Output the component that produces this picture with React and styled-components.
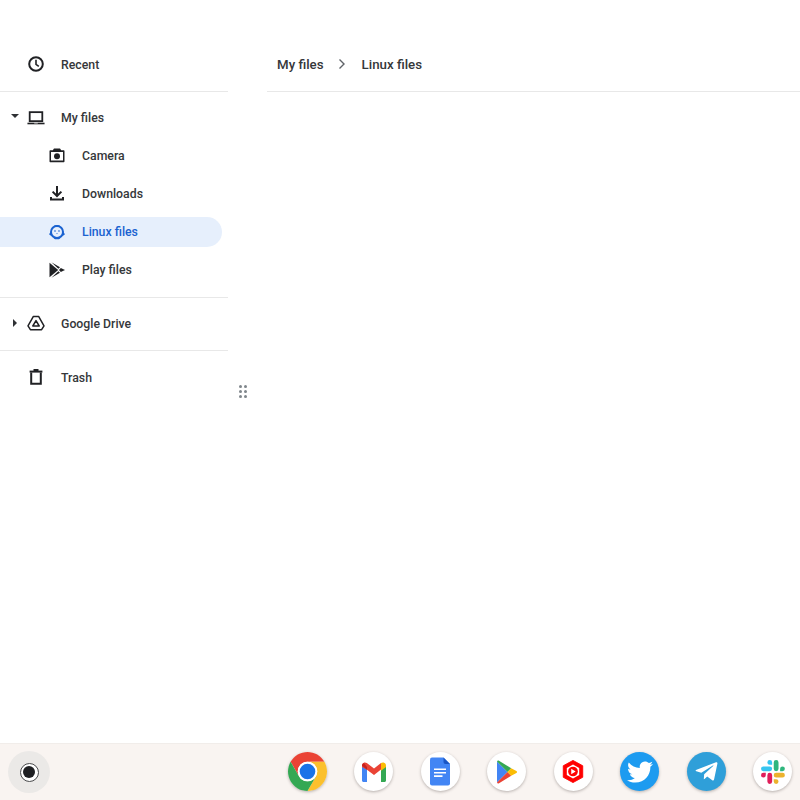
import React from 'react';
import styled, { createGlobalStyle } from 'styled-components';
import { FaTwitter, FaTelegramPlane } from 'react-icons/fa';

const GlobalStyle = createGlobalStyle`
  html, body {
    margin: 0;
    padding: 0;
    background: #fff;
    font-family: Roboto, "Liberation Sans", sans-serif;
  }
`;

const Page = styled.div`
  display: flex;
  flex-direction: column;
  width: 800px;
  height: 800px;
  overflow: hidden;
`;

const Body = styled.div`
  display: flex;
  flex: 1;
  min-height: 0;
`;

const Sidebar = styled.nav`
  display: flex;
  flex-direction: column;
  width: 228px;
  padding-top: 45px;
`;

const Section = styled.div`
  display: flex;
  flex-direction: column;
  padding: ${(p) => p.$padding};
  border-bottom: ${(p) => (p.$last ? 'none' : '1px solid #e8e8e8')};
`;

const Row = styled.div`
  display: flex;
  align-items: center;
  height: 38px;
  padding-left: ${(p) => (p.$child ? '48px' : '27px')};
  font-size: 12.3px;
  font-weight: 500;
  color: ${(p) => (p.$active ? '#1a62d0' : '#35373a')};
  position: relative;

  ${(p) =>
    p.$active &&
    `
    &::before {
      content: '';
      position: absolute;
      left: 0;
      top: 5px;
      width: 222px;
      height: 30px;
      background: #e6effc;
      border-radius: 0 15px 15px 0;
    }
  `}
`;

const Caret = styled.span`
  position: absolute;
  left: ${(p) => (p.$open ? '11px' : '13px')};
  top: 16px;
  width: 0;
  height: 0;
  border-style: solid;
  ${(p) =>
    p.$open
      ? 'border-width: 4px 4px 0 4px; border-color: #2f3134 transparent transparent transparent;'
      : 'border-width: 4px 0 4px 4px; border-color: transparent transparent transparent #2f3134; top: 15px;'}
`;

const IconSlot = styled.span`
  position: relative;
  top: ${(p) => (p.$nudge ? '1px' : '0')};
  display: flex;
  align-items: center;
  justify-content: center;
  width: 18px;
  height: 18px;
  margin-right: 16px;
  flex-shrink: 0;
`;

const Label = styled.span`
  position: relative;
  top: 1px;
`;

const Gutter = styled.div`
  display: flex;
  justify-content: center;
  width: 39px;
  box-sizing: border-box;
  padding: 385px 9px 0 0;
  flex-shrink: 0;
`;

const Grip = styled.div`
  display: grid;
  grid-template-columns: 3px 3px;
  grid-auto-rows: 3px;
  gap: 2px;
  height: 13px;

  span {
    border-radius: 50%;
    background: #7f868b;
  }
`;

const Content = styled.main`
  flex: 1;
  min-width: 0;
`;

const Breadcrumbs = styled.div`
  display: flex;
  align-items: center;
  height: 47px;
  margin-top: 45px;
  padding: 0 0 8px 10px;
  box-sizing: border-box;
  border-bottom: 1px solid #e8e8e8;
  font-size: 13.3px;
  font-weight: 500;
  color: #35373a;
`;

const Chevron = styled.svg`
  width: 10px;
  height: 12px;
  margin: 0 14.5px 0 13.5px;
`;

const Shelf = styled.footer`
  display: flex;
  align-items: center;
  justify-content: space-between;
  height: 57px;
  box-sizing: border-box;
  padding: 0 8px;
  background: #f9f4f1;
  border-top: 1px solid #f1edea;
`;

const Launcher = styled.div`
  display: flex;
  align-items: center;
  justify-content: center;
  width: 42px;
  height: 42px;
  border-radius: 50%;
  background: #ebe9e7;
`;

const LauncherRing = styled.div`
  display: flex;
  align-items: center;
  justify-content: center;
  width: 17px;
  height: 17px;
  border: 1px solid #4a4b4d;
  border-radius: 50%;
  background: #fff;
`;

const LauncherDot = styled.div`
  width: 12px;
  height: 12px;
  border-radius: 50%;
  background: #1e1f22;
`;

const Apps = styled.div`
  display: flex;
  align-items: center;
  gap: 27.43px;
  margin-bottom: 1px;
`;

const AppIcon = styled.div`
  display: flex;
  align-items: center;
  justify-content: center;
  width: 39px;
  height: 39px;
  border-radius: 50%;
  background: ${(p) => p.$bg || '#fff'};
  color: #fff;
  box-shadow: 0 1px 3px rgba(60, 50, 45, 0.35);
`;

const ClockIcon = () => (
  <svg width="18" height="18" viewBox="0 0 18 18" fill="none" stroke="#202124" strokeWidth="2">
    <circle cx="9" cy="9" r="6.800" />
    <path d="M9 4.800V9.400l2.800 1.900" strokeWidth="1.600" />
  </svg>
);

const LaptopIcon = () => (
  <svg width="20" height="18" viewBox="0 0 20 18" fill="none">
    <rect x="3" y="2.500" width="14" height="10" stroke="#202124" strokeWidth="2" />
    <path d="M.5 14.200h19v1.800H.5z" fill="#202124" />
    <path d="M8 14.200h4v.8H8z" fill="#fff" />
  </svg>
);

const CameraIcon = () => (
  <svg width="18" height="18" viewBox="0 0 18 18">
    <path
      fillRule="evenodd"
      fill="#202124"
      d="M6 1.500h6l1.200 1.800h2.300c.6 0 1 .4 1 1v10c0 .6-.4 1-1 1h-13c-.6 0-1-.4-1-1v-10c0-.6.4-1 1-1h2.300zM3 5v8.600h12V5z"
    />
    <circle cx="9" cy="9.200" r="3" fill="#202124" />
  </svg>
);

const DownloadIcon = () => (
  <svg width="18" height="18" viewBox="0 0 18 18" fill="none" stroke="#202124" strokeWidth="2">
    <path d="M9 2v9.500" />
    <path d="M4.600 7.600 9 12l4.400-4.400" />
    <path d="M3 13v2.500h12V13" />
  </svg>
);

const LinuxIcon = () => (
  <svg width="18" height="18" viewBox="0 0 18 18">
    <circle cx="9" cy="9" r="6" fill="none" stroke="#1a62d0" strokeWidth="2" />
    <path d="M1 11.200 3.400 8v5zM17 11.200 14.600 8v5zM6.500 2.200h5v1.600h-5zM5.600 15l1.400 1.300h4l1.400-1.300z" fill="#1a62d0" />
    <circle cx="7" cy="8" r=".9" fill="#5c8fdf" />
    <circle cx="11" cy="8" r=".9" fill="#5c8fdf" />
    <path d="M8 10h2l-1 1.300z" fill="#5c8fdf" />
  </svg>
);

const PlayFilesIcon = () => (
  <svg width="18" height="18" viewBox="0 0 18 18" fill="#202124">
    <path d="M1.500 1.800 10.200 9l-8.700 7.200z" />
    <path d="M3.400 1.200 12 6.200 10.400 7.800zM3.400 16.800 12 11.800 10.400 10.200z" />
    <path d="M12.800 7 17 9l-4.200 2L11 9z" />
  </svg>
);

const DriveIcon = () => (
  <svg width="18" height="18" viewBox="0 0 18 18" fill="none" stroke="#202124" strokeWidth="1.500" strokeLinejoin="round">
    <path d="M6.400 2.400h5.200l5.400 9.400-2.400 3.900H3.400L1 11.800z" />
    <path d="M9 6.600 12.200 12H5.800z" />
  </svg>
);

const TrashIcon = () => (
  <svg width="18" height="18" viewBox="0 0 18 18" fill="none" stroke="#202124" strokeWidth="2">
    <path d="M4.200 4.500v11.300h9.600V4.500" />
    <path d="M2.600 3.600h12.800" />
    <path d="M6.500 2h5" />
  </svg>
);

const ChromeLogo = () => (
  <svg width="39" height="39" viewBox="4 4 40 40">
    <path fill="#ea4335" d="M6.680 14A20 20 0 0 1 41.320 14H24A10 10 0 0 0 15.340 29z" />
    <path fill="#fbc02d" d="M41.320 14A20 20 0 0 1 24 44L32.660 29A10 10 0 0 0 24 14z" />
    <path fill="#34a853" d="M24 44A20 20 0 0 1 6.680 14L15.340 29A10 10 0 0 0 32.660 29z" />
    <circle cx="24" cy="24" r="10" fill="#fff" />
    <circle cx="24" cy="24" r="8" fill="#1a73e8" />
  </svg>
);

const GmailLogo = () => (
  <svg width="26" height="20" viewBox="0 0 26 20">
    <path fill="#4285f4" d="M1 5h5v15H2.500C1.700 20 1 19.300 1 18.500z" />
    <path fill="#34a853" d="M20 5h5v13.500c0 .8-.7 1.500-1.500 1.500H20z" />
    <path fill="#ea4335" d="M1 3.500C1 1 3.800-.4 5.800 1.100L13 6.500l7-5.400 0 6.500L13 13 6 7.700 1 5z" />
    <path fill="#fbbc04" d="M20 1.100C22.100-.4 25 1 25 3.500V5l-5 3.700z" />
    <path fill="#c5221f" d="M1 3.500 6 7.700V5L3 1.200C1.800 1.500 1 2.400 1 3.500z" />
  </svg>
);

const DocsLogo = () => (
  <svg width="20" height="29" viewBox="0 0 20 28">
    <path fill="#4285f4" d="M2 0h11.500L20 6.500V26a2 2 0 0 1-2 2H2a2 2 0 0 1-2-2V2a2 2 0 0 1 2-2z" />
    <path fill="#1a56c4" d="M13.500 0 20 6.500h-4.500a2 2 0 0 1-2-2z" />
    <path fill="#fff" d="M4 11h12v1.600H4zM4 14.400h12V16H4zM4 17.800h8.500v1.600H4z" />
  </svg>
);

const PlayLogo = () => (
  <svg width="22" height="24" viewBox="0 0 22 24">
    <path fill="#4285f4" d="M1 1.500v21L11.500 12z" />
    <path fill="#34a853" d="M1 1.500 11.500 12l3.700-3.800L3 .8C2 .2 1.300.6 1 1.500z" />
    <path fill="#ea4335" d="M1 22.500 11.500 12l3.700 3.800L3 23.200c-1 .6-1.700.2-2-.7z" />
    <path fill="#fbbc04" d="M15.200 8.200 20.400 11c.9.6.9 1.400 0 2l-5.200 2.800L11.500 12z" />
  </svg>
);

const StudioLogo = () => (
  <svg width="22" height="23" viewBox="0 0 24 26">
    <path fill="#f00" d="M12 .5 23 6.500v13L12 25.500 1 19.500v-13z" stroke="#f00" strokeLinejoin="round" />
    <path fill="#fff" d="M12 5 19 9v8l-7 4-7-4V9z" />
    <circle cx="12" cy="13" r="5.500" fill="#f00" />
    <path fill="#fff" d="M10 10v6l5-3z" />
  </svg>
);

const SlackLogo = () => (
  <svg width="24" height="24" viewBox="0 0 54 54">
    <path fill="#36C5F0" d="M19.712.133a5.381 5.381 0 0 0-5.376 5.387 5.381 5.381 0 0 0 5.376 5.386h5.376V5.520A5.381 5.381 0 0 0 19.712.133m0 14.365H5.376A5.381 5.381 0 0 0 0 19.884a5.381 5.381 0 0 0 5.376 5.387h14.336a5.381 5.381 0 0 0 5.376-5.387 5.381 5.381 0 0 0-5.376-5.386" />
    <path fill="#2EB67D" d="M53.760 19.884a5.381 5.381 0 0 0-5.376-5.386 5.381 5.381 0 0 0-5.376 5.386v5.387h5.376a5.381 5.381 0 0 0 5.376-5.387m-14.336 0V5.520A5.381 5.381 0 0 0 34.048.133a5.381 5.381 0 0 0-5.376 5.387v14.364a5.381 5.381 0 0 0 5.376 5.387 5.381 5.381 0 0 0 5.376-5.387" />
    <path fill="#ECB22E" d="M34.048 54a5.381 5.381 0 0 0 5.376-5.387 5.381 5.381 0 0 0-5.376-5.386h-5.376v5.386A5.381 5.381 0 0 0 34.048 54m0-14.365h14.336a5.381 5.381 0 0 0 5.376-5.386 5.381 5.381 0 0 0-5.376-5.387H34.048a5.381 5.381 0 0 0-5.376 5.387 5.381 5.381 0 0 0 5.376 5.386" />
    <path fill="#E01E5A" d="M0 34.249a5.381 5.381 0 0 0 5.376 5.386 5.381 5.381 0 0 0 5.376-5.386v-5.387H5.376A5.381 5.381 0 0 0 0 34.250m14.336-.001v14.364A5.381 5.381 0 0 0 19.712 54a5.381 5.381 0 0 0 5.376-5.387V34.250a5.381 5.381 0 0 0-5.376-5.387 5.381 5.381 0 0 0-5.376 5.387" />
  </svg>
);

const NavRow = ({ icon, label, child, active, caret, nudge }) => (
  <Row $child={child} $active={active}>
    {caret && <Caret $open={caret === 'open'} />}
    <IconSlot $nudge={nudge}>{icon}</IconSlot>
    <Label>{label}</Label>
  </Row>
);

export default function App() {
  return (
    <Page>
      <GlobalStyle />
      <Body>
        <Sidebar>
          <Section $padding="0 0 8px">
            <NavRow icon={<ClockIcon />} label="Recent" />
          </Section>
          <Section $padding="6px 0 9px">
            <NavRow nudge icon={<LaptopIcon />} label="My files" caret="open" />
            <NavRow nudge child icon={<CameraIcon />} label="Camera" />
            <NavRow child icon={<DownloadIcon />} label="Downloads" />
            <NavRow nudge child active icon={<LinuxIcon />} label="Linux files" />
            <NavRow nudge child icon={<PlayFilesIcon />} label="Play files" />
          </Section>
          <Section $padding="6px 0 8px">
            <NavRow icon={<DriveIcon />} label="Google Drive" caret="closed" />
          </Section>
          <Section $last $padding="7px 0 8px">
            <NavRow icon={<TrashIcon />} label="Trash" />
          </Section>
        </Sidebar>
        <Gutter>
          <Grip>
            {[0, 1, 2, 3, 4, 5].map((i) => (
              <span key={i} />
            ))}
          </Grip>
        </Gutter>
        <Content>
          <Breadcrumbs>
            <span>My files</span>
            <Chevron viewBox="0 0 10 12" fill="none" stroke="#5f6368" strokeWidth="1.400">
              <path d="M2.500 1.500 7 6l-4.500 4.500" />
            </Chevron>
            <span>Linux files</span>
          </Breadcrumbs>
        </Content>
      </Body>
      <Shelf>
        <Launcher>
          <LauncherRing>
            <LauncherDot />
          </LauncherRing>
        </Launcher>
        <Apps>
          <AppIcon $bg="transparent"><ChromeLogo /></AppIcon>
          <AppIcon><GmailLogo /></AppIcon>
          <AppIcon><DocsLogo /></AppIcon>
          <AppIcon><PlayLogo /></AppIcon>
          <AppIcon><StudioLogo /></AppIcon>
          <AppIcon $bg="#1d9bf0"><FaTwitter size={26} /></AppIcon>
          <AppIcon $bg="#2f9fd9"><FaTelegramPlane size={25} /></AppIcon>
          <AppIcon><SlackLogo /></AppIcon>
        </Apps>
      </Shelf>
    </Page>
  );
}
